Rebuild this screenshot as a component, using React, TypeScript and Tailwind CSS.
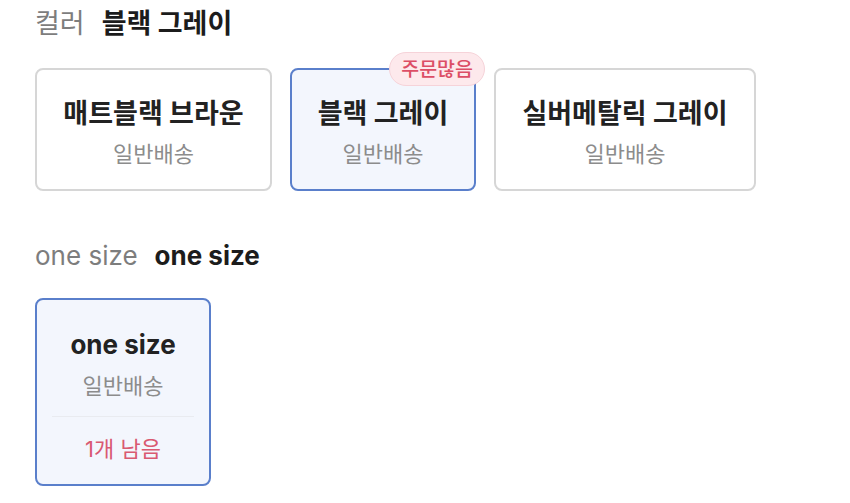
const font = { fontFamily: 'Inter, "Noto Sans CJK KR", sans-serif' }

type Option = {
  name: string
  width: string
  selected?: boolean
  badge?: string
}

const colors: Option[] = [
  { name: '매트블랙 브라운', width: 'w-[237px]' },
  { name: '블랙 그레이', width: 'w-[186px]', selected: true, badge: '주문많음' },
  { name: '실버메탈릭 그레이', width: 'w-[262px]' },
]

function SectionHeader({ label, value, size }: { label: string; value: string; size: string }) {
  return (
    <div className={`flex items-center h-[32px] leading-[32px] ${size}`}>
      <span className="text-[#7d7d7d]">{label}</span>
      <span className="ml-[17px] font-bold text-[#1c1c1c]">{value}</span>
    </div>
  )
}

function OptionCard({ name, width, selected, badge }: Option) {
  return (
    <div
      className={`relative ${width} h-[123px] rounded-[8px] border-2 flex flex-col items-center pt-[28px] ${
        selected ? 'border-[#5a7fcb] bg-[#f3f6fd]' : 'border-[#d6d6d6] bg-white'
      }`}
    >
      {badge && (
        <span className="absolute -top-[18px] -right-[11px] h-[34px] px-[11px] rounded-full border border-[#f6d3d9] bg-[#fde9ec] text-[#dc4e66] text-[19.5px] leading-[32px] font-medium">
          {badge}
        </span>
      )}
      <span className="text-[27px] leading-[32px] font-bold text-[#222]">{name}</span>
      <span className="mt-[11px] text-[22px] leading-[26px] text-[#8c8c8c]">일반배송</span>
    </div>
  )
}

export default function App() {
  return (
    <div className="w-[850px] h-[503px] bg-white pl-[35px] pt-[8px]" style={font}>
      <SectionHeader label="컬러" value="블랙 그레이" size="text-[27px]" />

      <div className="mt-[28px] flex gap-[18px]">
        {colors.map((c) => (
          <OptionCard key={c.name} {...c} />
        ))}
      </div>

      <div className="mt-[49px]">
        <SectionHeader label="one size" value="one size" size="text-[26px]" />
      </div>

      <div className="mt-[26px] w-[176px] h-[188px] rounded-[8px] border-2 border-[#5a7fcb] bg-[#f3f6fd] flex flex-col items-center pt-[29px]">
        <span className="text-[26px] leading-[32px] font-bold text-[#222]">one size</span>
        <span className="mt-[12px] text-[22px] leading-[26px] text-[#8c8c8c]">일반배송</span>
        <div className="mt-[17px] self-stretch mx-[15px] h-px bg-[#e9ebf0]" />
        <span className="mt-[19px] text-[22px] leading-[26px] text-[#d95a72]">1개 남음</span>
      </div>
    </div>
  )
}
